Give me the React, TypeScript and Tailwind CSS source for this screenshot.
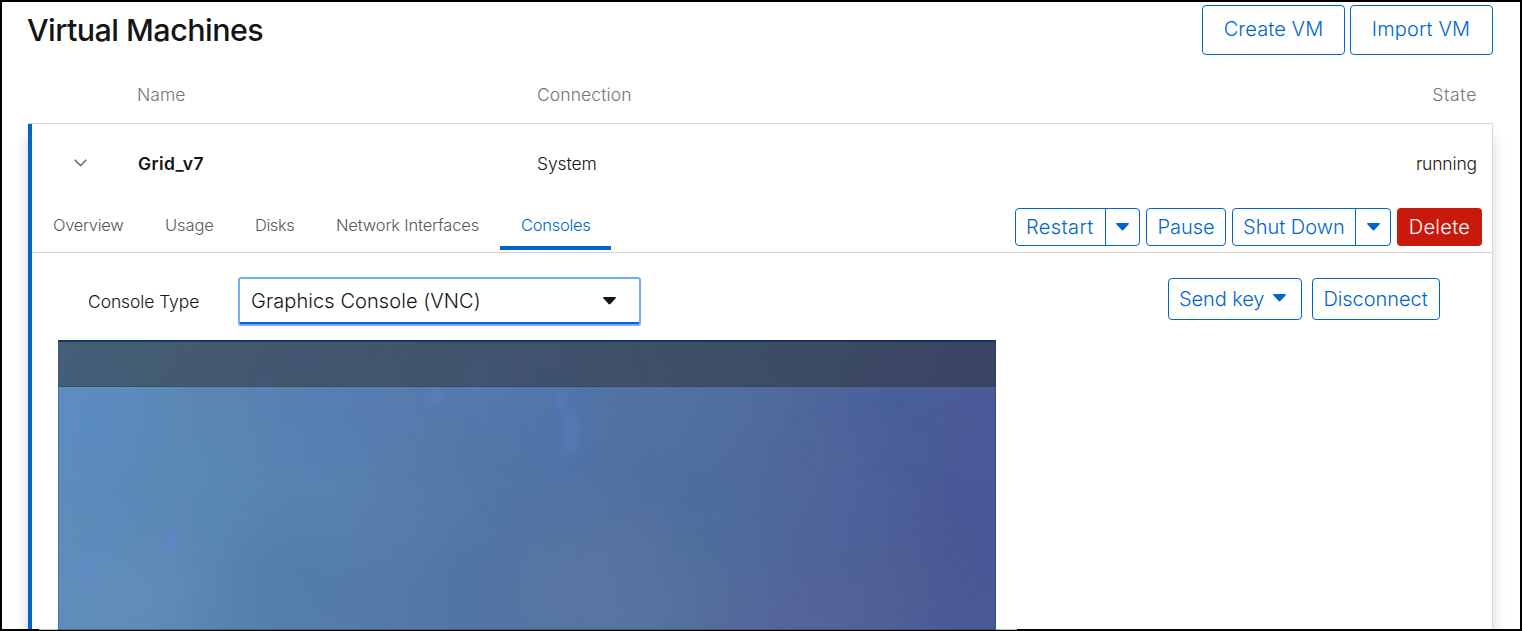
import React from "react";

function Caret({ className }: { className: string }) {
  return (
    <svg viewBox="0 0 12 8" className={`h-[8px] w-[13px] shrink-0 ${className}`} preserveAspectRatio="none" fill="currentColor">
      <path d="M0.8 0h10.4c.7 0 1 .7.5 1.2L6.8 7.1c-.4.5-1.2.5-1.6 0L.3 1.2C-.2.7.1 0 .8 0z" />
    </svg>
  );
}

const outline = "flex items-center rounded-[4px] border border-[#0066cc] bg-white text-[20px] text-[#0066cc]";

function SplitButton({ label, box, text, toggle }: { label: string; box: string; text: string; toggle: string }) {
  return (
    <div className={`${outline} h-[38px] ${box}`}>
      <span className={`grow whitespace-nowrap ${text}`}>{label}</span>
      <span className={`flex h-full shrink-0 items-center justify-center border-l border-[#0066cc] ${toggle}`}>
        <Caret className="mb-px" />
      </span>
    </div>
  );
}

const tabs = [
  { label: "Overview", box: "w-[112px]", text: "tracking-[-0.32px]" },
  { label: "Usage", box: "w-[90px]", text: "tracking-[-0.1px]" },
  { label: "Disks", box: "w-[81px]", text: "tracking-[-0.45px]" },
  { label: "Network Interfaces", box: "w-[185px]", text: "tracking-[-0.17px]" },
  { label: "Consoles", box: "w-[111px]", text: "tracking-[-0.28px]" },
];

const blobs: [number, number, number, number, string, number][] = [
  [30, 80, 50, 70, "#5a8bc4", 0.6],
  [200, 150, 110, 70, "#5c8ab5", 0.7],
  [70, 255, 80, 60, "#6592bd", 0.5],
  [235, 220, 50, 60, "#5079a4", 0.5],
  [275, 80, 80, 50, "#587db5", 0.5],
  [245, 155, 40, 40, "#5280b3", 0.4],
  [395, 60, 40, 30, "#5a7bb2", 0.5],
  [470, 30, 60, 40, "#5879b5", 0.5],
  [350, 180, 60, 60, "#5c7eac", 0.6],
  [410, 240, 60, 60, "#5073a5", 0.5],
  [500, 90, 40, 60, "#4f75ac", 0.5],
  [560, 250, 110, 70, "#5d789f", 0.6],
  [660, 190, 50, 90, "#4e6e9b", 0.6],
  [630, 65, 80, 40, "#5273a3", 0.5],
  [740, 130, 60, 70, "#55699c", 0.4],
  [750, 275, 110, 45, "#5d6899", 0.5],
  [850, 70, 60, 50, "#475f99", 0.6],
  [800, 170, 40, 60, "#4e659c", 0.5],
  [930, 75, 35, 40, "#51599a", 0.5],
  [910, 200, 50, 80, "#4a5696", 0.6],
  [840, 240, 50, 60, "#506092", 0.5],
];

const glints: [number, number, number, number, number, number][] = [
  [113, 202, 5, 13, 10, 0.55],
  [30, 225, 6, 22, 25, 0.4],
  [55, 178, 5, 28, 40, 0.35],
  [207, 46, 7, 16, 0, 0.25],
  [245, 18, 4, 16, 0, 0.25],
  [376, 58, 5, 12, 40, 0.35],
  [418, 34, 10, 18, 20, 0.35],
  [503, 62, 4, 10, 0, 0.55],
  [513, 94, 6, 22, 4, 0.4],
];

function Desktop() {
  return (
    <svg viewBox="0 0 938 290" className="block h-full w-full" preserveAspectRatio="none">
      <defs>
        <linearGradient id="base" x1="0" y1="0" x2="1" y2="0.08">
          <stop offset="0" stopColor="#6090be" />
          <stop offset="0.25" stopColor="#5882b0" />
          <stop offset="0.5" stopColor="#5477a8" />
          <stop offset="0.75" stopColor="#506c9f" />
          <stop offset="1" stopColor="#4b5b98" />
        </linearGradient>
        <filter id="soft" x="-100%" y="-100%" width="300%" height="300%">
          <feGaussianBlur stdDeviation="28" />
        </filter>
        <filter id="glow" x="-300%" y="-300%" width="700%" height="700%">
          <feGaussianBlur stdDeviation="5" />
        </filter>
      </defs>
      <rect width="938" height="290" fill="url(#base)" />
      {blobs.map(([x, y, rx, ry, c, o]) => (
        <ellipse key={`${x}-${y}`} cx={x} cy={y} rx={rx} ry={ry} fill={c} opacity={o} filter="url(#soft)" />
      ))}
      {glints.map(([x, y, rx, ry, a, o]) => (
        <ellipse key={`${x}-${y}`} cx={x} cy={y} rx={rx} ry={ry} transform={`rotate(${a} ${x} ${y})`} fill="#5f86dc" opacity={o} filter="url(#glow)" />
      ))}
      <rect width="938" height="47" fill="#2c2e2d" opacity="0.5" />
      <rect y="46" width="938" height="1" fill="#2c3e55" opacity="0.4" />
      <rect width="938" height="2" fill="#0b335f" opacity="0.85" />
      <rect width="1" height="290" fill="#1d5a90" opacity="0.45" />
      <rect x="937" width="1" height="290" fill="#1f3a85" opacity="0.5" />
    </svg>
  );
}

export default function App() {
  return (
    <div className="relative flex h-[631px] w-[1522px] flex-col overflow-hidden border-2 border-b-0 border-black bg-white font-['Inter',sans-serif] font-[350] text-[#151515]">
      <header className="relative z-10 flex h-[77px] shrink-0 justify-between pt-[3px] pr-[27px] pl-[25px]">
        <h1 className="mt-[3px] h-[44px] text-[30.5px] leading-[44px] font-[480] tracking-[-0.55px]">Virtual Machines</h1>
        <div className="flex gap-[5px]">
          <button className={`${outline} h-[50px] w-[143px] justify-center pb-[2px] tracking-[0.1px]`}>Create VM</button>
          <button className={`${outline} h-[50px] w-[143px] justify-center pr-px pb-[2px] tracking-[0.15px]`}>Import VM</button>
        </div>
      </header>

      <div className="relative z-10 flex h-[44px] shrink-0 bg-white pr-[43px] pl-[135px] text-[17.5px] leading-[32px] text-[#72767b]">
        <span className="w-[400px]">Name</span>
        <span className="grow tracking-[0.1px]">Connection</span>
        <span className="tracking-[0.7px]">State</span>
      </div>

      <main className="mr-[27px] ml-[26px] flex grow flex-col border-t border-r border-[#d8dadc] shadow-[0_14px_14px_0_rgba(3,3,3,0.16)]">
        <div className="flex grow flex-col border-l-4 border-[#0066cc] bg-white">
          <div className="flex h-[77px] shrink-0 items-center pt-[3px] pr-[15px] pl-[42px] text-[17.5px]">
            <svg viewBox="0 0 13 8" className="mb-[2px] h-[8px] w-[13px]" fill="none" stroke="#6a6e73" strokeWidth="1.6">
              <path d="M0.7 0.8l5.8 5.8 5.8-5.8" />
            </svg>
            <span className="ml-[51px] w-[399px] font-semibold tracking-[0.4px]">Grid_v7</span>
            <span className="grow tracking-[-0.1px]">System</span>
            <span className="tracking-[-0.15px]">running</span>
          </div>

          <div className="flex h-[52px] shrink-0 justify-between border-b border-[#d2d2d2] pr-[10px]">
            <nav className="flex h-[49px]">
              {tabs.map((t) => (
                <a
                  key={t.label}
                  className={`flex items-center border-b-4 pt-[4px] pl-[21px] text-[16.5px] whitespace-nowrap ${t.box} ${t.text} ${t.label === "Consoles" ? "border-[#0066cc] text-[#0066cc]" : "border-transparent text-[#55595e]"}`}
                >
                  {t.label}
                </a>
              ))}
            </nav>
            <div className="mt-[7px] flex h-[38px] gap-[6px]">
              <SplitButton label="Restart" box="w-[125px]" text="pl-[10px] tracking-[0.4px]" toggle="w-[34px]" />
              <button className={`${outline} h-[38px] w-[80px] justify-center`}>Pause</button>
              <SplitButton label="Shut Down" box="w-[159px]" text="pl-[10px] tracking-[0px]" toggle="w-[35px]" />
              <button className="flex h-[38px] w-[85px] items-center justify-center rounded-[4px] bg-[#c9190b] text-[20px] tracking-[0.3px] text-white">Delete</button>
            </div>
          </div>

          <div className="flex h-[87px] shrink-0 pt-[24px] pr-[52px] pl-[56px]">
            <label className="w-[150px] text-[17.5px] leading-[50px] tracking-[-0.1px]">Console Type</label>
            <div className="flex h-[49px] w-[403px] rounded-[3px] border-2 border-[#7aaaf6]">
              <div className="flex grow items-center border-b-2 border-[#0066cc] pr-[23px] pl-[11px] text-[20px] text-[#151515]">
                <span className="grow tracking-[0.08px]">Graphics Console (VNC)</span>
                <Caret className="" />
              </div>
            </div>
            <div className="mt-px ml-auto flex gap-[10px]">
              <button className={`${outline} h-[42px] w-[134px] pr-[15px] pl-[10px] tracking-[-0.1px]`}>
                <span className="grow text-left whitespace-nowrap">Send key</span>
                <Caret className="mb-[3px]" />
              </button>
              <button className={`${outline} h-[42px] w-[128px] justify-center pr-px tracking-[-0.05px]`}>Disconnect</button>
            </div>
          </div>

          <div className="ml-[26px] h-[290px] w-[938px] shrink-0">
            <Desktop />
          </div>
        </div>
      </main>
      <div className="absolute right-0 bottom-0 left-0 flex h-[2px] flex-col">
        <div className="flex h-px">
          <div className="w-[37px] bg-black" />
          <div className="w-[978px] bg-[#16243c]/30" />
          <div className="grow bg-black" />
        </div>
        <div className="h-px bg-black" />
      </div>
    </div>
  );
}
